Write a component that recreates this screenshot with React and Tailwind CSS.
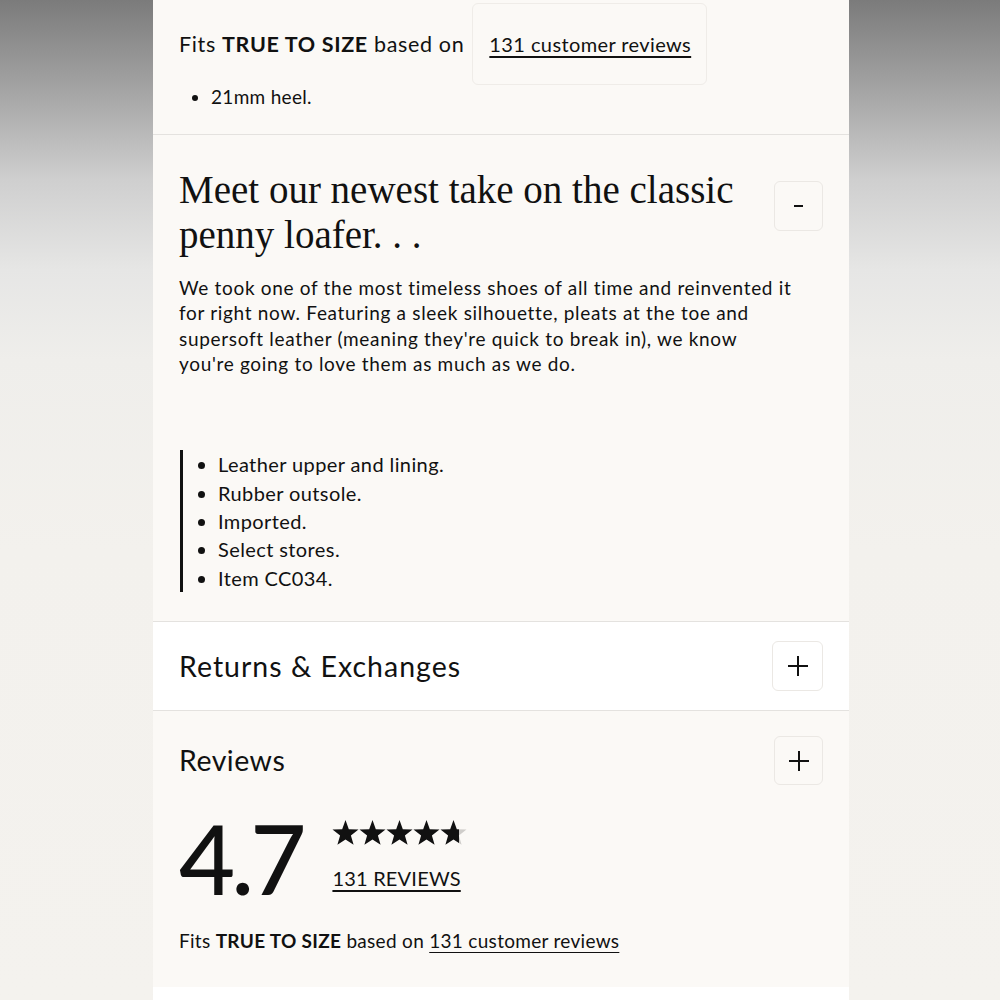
import React from 'react';

const sans = { fontFamily: 'Lato, "Noto Sans", sans-serif' };

const SquareButton = ({ children, className = '' }) => (
    <div className={`flex items-center justify-center rounded-md border border-[#ebe8e4] ${className}`}>
        {children}
    </div>
);

const PlusIcon = () => (
    <svg width="22" height="22" viewBox="0 0 22 22" fill="none" stroke="#111" strokeWidth="2">
        <path d="M11 1v20M1 11h20" />
    </svg>
);

const Star = ({ fill = 1, id }) => (
    <svg width="27" height="26" viewBox="1 1.2 22 21">
        <defs>
            <linearGradient id={id}>
                <stop offset={`${fill * 100}%`} stopColor="#111" />
                <stop offset={`${fill * 100}%`} stopColor="#cfcdca" />
            </linearGradient>
        </defs>
        <path
            d="M12 1.2l2.7 7.4 7.9.2-6.2 4.9 2.2 7.6L12 16.9l-6.6 4.4 2.2-7.6-6.2-4.9 7.9-.2z"
            fill={`url(#${id})`}
        />
    </svg>
);

const SideFade = ({ className = '' }) => (
    <div
        className={`h-full bg-[linear-gradient(to_bottom,#7b7b7b_0%,#a4a4a4_9%,#cfcfcf_18%,#e6e6e5_27%,#efeeeb_36%,#f3f1ed_55%,#f4f2ee_100%)] ${className}`}
    />
);

export default function App() {
    return (
        <div className="flex h-[1000px] w-[1000px] overflow-hidden bg-[#f4f2ee]" style={sans}>
            <SideFade className="w-[153px]" />

            <main className="flex w-[696px] flex-col bg-[#fbf9f6] text-[#111]">
                {/* Fit summary */}
                <section className="h-[135px] border-b border-[#e4e2df] px-[26px] pt-[3px]">
                    <div className="flex items-center">
                        <p className="text-[21.5px] tracking-[0.65px]">
                            Fits <b className="font-bold">TRUE TO SIZE</b> based on
                        </p>
                        <div className="ml-[8px] flex h-[82px] items-center rounded-md border border-[#efece8] pl-[16px] pr-[15px]">
                            <a className="text-[20px] tracking-[0.4px] underline underline-offset-[4px]">
                                131 customer reviews
                            </a>
                        </div>
                    </div>
                    <ul className="mt-[-1px] list-disc pl-[32px] text-[19px] leading-[26px] tracking-[0.3px]">
                        <li>21mm heel.</li>
                    </ul>
                </section>

                {/* Product details */}
                <section className="h-[487px] border-b border-[#e4e2df] px-[26px] pt-[32px]">
                    <div className="flex items-start justify-between">
                        <h2
                            className="text-[39px] leading-[45px] text-[#111]"
                            style={{ fontFamily: '"Liberation Serif", serif' }}
                        >
                            Meet our newest take on the classic
                            <br />
                            penny loafer. . .
                        </h2>
                        <SquareButton className="mt-[14px] h-[50px] w-[49px]">
                            <span className="block h-[2px] w-[9px] bg-[#111]" />
                        </SquareButton>
                    </div>
                    <p className="mt-[18px] text-[19px] leading-[25.3px] tracking-[0.68px]">
                        We took one of the most timeless shoes of all time and reinvented it
                        <br />
                        for right now. Featuring a sleek silhouette, pleats at the toe and
                        <br />
                        supersoft leather (meaning they're quick to break in), we know
                        <br />
                        you're going to love them as much as we do.
                    </p>
                    <ul className="mt-[74px] ml-[1px] list-disc border-l-[3px] border-[#111] pl-[35px] text-[20px] leading-[28.4px] tracking-[0.4px]">
                        <li>Leather upper and lining.</li>
                        <li>Rubber outsole.</li>
                        <li>Imported.</li>
                        <li>Select stores.</li>
                        <li>Item CC034.</li>
                    </ul>
                </section>

                {/* Returns */}
                <section className="flex h-[89px] items-center justify-between border-b border-[#e4e2df] bg-white px-[26px]">
                    <h3 className="text-[28.5px] tracking-[1px]">Returns &amp; Exchanges</h3>
                    <SquareButton className="h-[50px] w-[51px]">
                        <PlusIcon />
                    </SquareButton>
                </section>

                {/* Reviews */}
                <section className="h-[276px] px-[26px] pt-[25px]">
                    <div className="flex items-center justify-between">
                        <h3 className="text-[28.5px] tracking-[0.5px]">Reviews</h3>
                        <SquareButton className="h-[49px] w-[49px]">
                            <PlusIcon />
                        </SquareButton>
                    </div>
                    <div className="mt-[24px] flex items-start">
                        <span className="text-[97px] font-medium leading-none tracking-[-4px]">4.7</span>
                        <div className="ml-[30px] mt-[11px] flex flex-col">
                            <div className="flex">
                                <Star id="s1" />
                                <Star id="s2" />
                                <Star id="s3" />
                                <Star id="s4" />
                                <Star id="s5" fill={0.72} />
                            </div>
                            <a className="mt-[20px] text-[20px] leading-[24px] tracking-[0.2px] underline underline-offset-[4px]">
                                131 REVIEWS
                            </a>
                        </div>
                    </div>
                    <p className="mt-[23px] text-[19px] leading-[24px] tracking-[0.3px]">
                        Fits <b className="font-bold">TRUE TO SIZE</b> based on{' '}
                        <a className="underline underline-offset-[4px]">131 customer reviews</a>
                    </p>
                </section>

                <div className="flex-1 bg-white" />
            </main>

            <SideFade className="flex-1" />
        </div>
    );
}
